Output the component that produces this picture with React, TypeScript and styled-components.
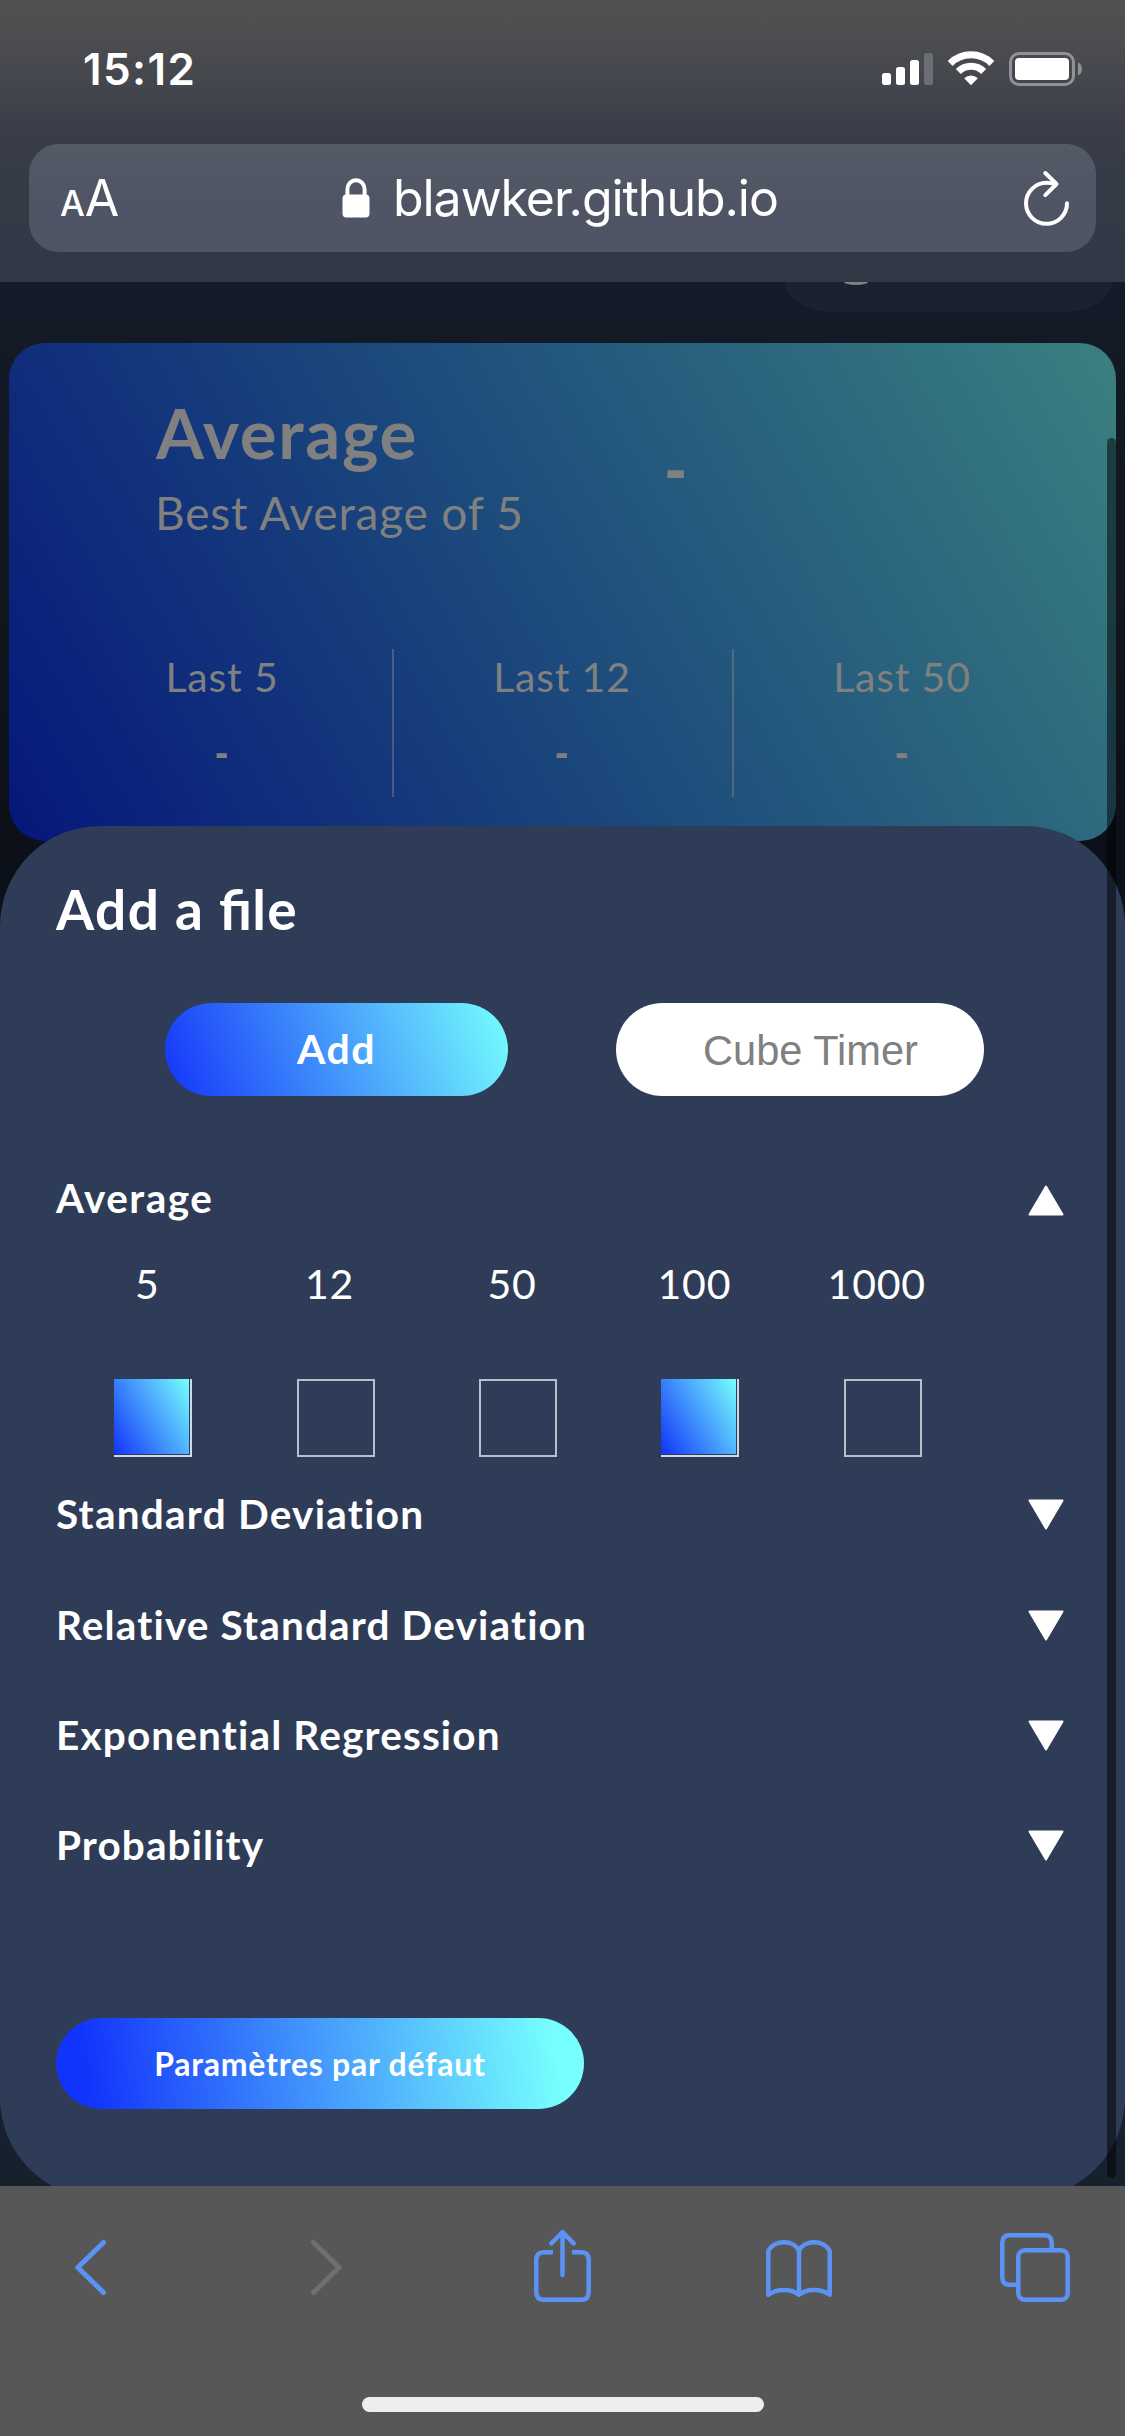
import React, { useState } from "react";
import styled, { createGlobalStyle, css } from "styled-components";

const GlobalStyle = createGlobalStyle`
  *, *::before, *::after { box-sizing: border-box; }
  body { margin: 0; background: #131926; }
  button, input { font: inherit; border: 0; margin: 0; padding: 0; background: none; outline: none; }
`;

const system = `Inter, "Liberation Sans", sans-serif`;
const rounded = `Lato, "Noto Sans", sans-serif`;

const Phone = styled.div`
  width: 1125px;
  height: 2436px;
  display: flex;
  flex-direction: column;
  overflow: hidden;
  font-family: ${rounded};
`;

/* ---------- Browser chrome ---------- */

const Chrome = styled.header`
  height: 282px;
  flex: none;
  padding: 0 29px;
  color: #fff;
  font-family: ${system};
  background: linear-gradient(180deg, #515151 0, #4c4d50 40px, #42454c 90px, #393d49 132px, #353a47 190px, #323745 282px);
`;

const StatusBar = styled.div`
  height: 144px;
  padding: 45px 13px 0 54px;
  display: flex;
  justify-content: space-between;
  align-items: flex-start;
`;

const Clock = styled.time`
  font-size: 44px;
  line-height: 48px;
  font-weight: 600;
  letter-spacing: 1.4px;
`;

const StatusIcons = styled.svg`
  width: 202px;
  height: 36px;
  margin-top: 6px;
  display: block;
`;

const AddressBar = styled.div`
  height: 108px;
  padding: 0 27px 0 31px;
  display: grid;
  grid-template-columns: 60px 1fr 48px;
  align-items: center;
  border-radius: 30px;
  background: linear-gradient(180deg, #555a67, #4f5564 50%, #4e5463);
`;

const ReaderButton = styled.button`
  height: 60px;
  color: #fff;
  display: flex;
  align-items: baseline;
  line-height: 60px;
  white-space: nowrap;
`;

const ReaderLetter = styled.span<{ $size: number; $weight: number }>`
  font-size: ${(p) => p.$size}px;
  font-weight: ${(p) => p.$weight};
`;

const Address = styled.div`
  display: flex;
  align-items: center;
  padding-left: 222px;
  font-size: 50px;
  line-height: 60px;
  white-space: nowrap;
`;

const LockIcon = styled.svg`
  width: 28px;
  height: 40px;
  margin-right: 23px;
`;

const Host = styled.span`
  letter-spacing: -1.05px;
`;

const ReloadIcon = styled.svg`
  width: 48px;
  height: 56px;
  display: block;
`;

/* ---------- Page behind the sheet ---------- */

const Viewport = styled.main`
  position: relative;
  flex: none;
  height: 1904px;
  overflow: hidden;
  background: linear-gradient(180deg, #141a27 0, #11161f 300px, #0c1119 560px, #0c1119 800px, #18202e 1500px, #17202d 100%);
`;

const TopRow = styled.div`
  height: 61px;
  padding-right: 13px;
  display: flex;
  justify-content: flex-end;
`;

const DimmedPill = styled.div`
  width: 327px;
  height: 30px;
  padding-left: 59px;
  border-radius: 0 0 48px 48px / 0 0 30px 30px;
  background: #1b2130;
`;

const PillGlyph = styled.div`
  width: 24px;
  height: 3px;
  border-radius: 0 0 12px 12px / 0 0 3px 3px;
  background: #808080;
`;

const SummaryCard = styled.section`
  width: 1107px;
  height: 498px;
  margin-left: 9px;
  padding: 54px 43px 0;
  border-radius: 36px;
  color: #808080;
  background: linear-gradient(60deg, #05177b 0%, #1e4d7c 50%, #3a8080 100%);
`;

const SummaryHead = styled.div`
  height: 252px;
  padding-left: 104px;
  display: grid;
  grid-template-columns: 509px 1fr;
`;

const SummaryTitle = styled.h1`
  margin: 0;
  font-size: 69px;
  line-height: 72px;
  font-weight: 700;
  letter-spacing: 1.7px;
`;

const SummaryCaption = styled.p`
  margin: 14px 0 0 -1px;
  font-size: 46px;
  line-height: 60px;
  letter-spacing: 0.8px;
`;

const Dash = styled.span<{ $size: number }>`
  font: 700 ${(p) => p.$size}px / 72px "Liberation Sans", sans-serif;
`;

const BestValue = styled.div`
  padding-top: 36px;
`;

const StatGrid = styled.div`
  display: grid;
  grid-template-columns: repeat(3, 340px);
`;

const Stat = styled.div`
  height: 148px;
  display: flex;
  flex-direction: column;
  align-items: center;
  gap: 11px;
  font-size: 41px;
  line-height: 56px;
  letter-spacing: 0.8px;

  & + & {
    box-shadow: inset 2px 0 rgba(128, 128, 128, 0.5);
  }
`;

/* ---------- Sheet ---------- */

const Sheet = styled.section`
  position: absolute;
  left: 0;
  top: 544px;
  width: 1125px;
  height: 1372px;
  padding: 49px 61px 0 56px;
  border-radius: 100px;
  color: #fff;
  background: #2f3c57;
`;

const SheetTitle = styled.h2`
  margin: 0;
  height: 128px;
  font-size: 55px;
  line-height: 68px;
  font-weight: 700;
  letter-spacing: 1.4px;
`;

const Ligature = styled.span`
  letter-spacing: 0;
  font-variant-ligatures: common-ligatures;
`;

const FileRow = styled.div`
  height: 93px;
  padding-left: 109px;
  display: flex;
  gap: 108px;
`;

const pill = css`
  border-radius: 47px;
  color: #fff;
  font-weight: 700;
`;

const AddButton = styled.button`
  ${pill}
  width: 343px;
  height: 93px;
  padding-bottom: 2px;
  font-size: 41px;
  letter-spacing: 1.5px;
  background: linear-gradient(70deg, #1434f9, #76fffe);
`;

const NameInput = styled.input`
  width: 368px;
  height: 93px;
  padding: 2px 0 0 87px;
  border-radius: 47px;
  background: #fff;
  font-family: "Liberation Sans", Arial, sans-serif;
  font-size: 41.6px;

  &::placeholder {
    color: #808080;
    opacity: 1;
  }
`;

const Sections = styled.div`
  padding-top: 75px;
`;

const SectionHeader = styled.button<{ $height: number }>`
  width: 100%;
  height: ${(p) => p.$height}px;
  display: flex;
  align-items: flex-start;
  justify-content: space-between;
  color: #fff;
  font-size: 40.5px;
  line-height: 54px;
  font-weight: 700;
  text-align: left;
`;

const SectionName = styled.span<{ $tracking: number }>`
  letter-spacing: ${(p) => p.$tracking}px;
`;

const Triangle = styled.svg<{ $open: boolean }>`
  width: 36px;
  height: 31px;
  margin-top: ${(p) => (p.$open ? 14 : 12)}px;
  transform: ${(p) => (p.$open ? "none" : "rotate(180deg)")};
`;

const Options = styled.div`
  height: 230px;
  display: grid;
  grid-template-columns: repeat(5, 182.4px);
`;

const Option = styled.label`
  display: flex;
  flex-direction: column;
  align-items: center;
  font-size: 41px;
  line-height: 54px;
  letter-spacing: 0.8px;
`;

const CheckBox = styled.input<{ $on: boolean }>`
  appearance: none;
  width: 78px;
  height: 78px;
  margin: 68px 0 0 12px;
  border: 2px solid #b9bec9;
  ${(p) =>
    p.$on &&
    css`
      border-color: #cfd8e6;
      border-top: 0;
      border-left: 0;
      padding: 0 1px 1px 0;
      background: linear-gradient(60deg, #1233fb, #76fffe) content-box;
    `}
`;

const DefaultsButton = styled.button`
  ${pill}
  display: block;
  width: 528px;
  height: 91px;
  font-size: 32px;
  letter-spacing: 0.75px;
  background: linear-gradient(82deg, #1233fb 6%, #76fffe 94%);
`;

const ScrollThumb = styled.div`
  position: absolute;
  left: 1107px;
  top: 156px;
  width: 9px;
  height: 1740px;
  border-radius: 5px;
  background: rgba(0, 0, 0, 0.5);
`;

/* ---------- Bottom toolbar ---------- */

const Toolbar = styled.footer`
  flex: 1;
  display: flex;
  flex-direction: column;
  align-items: center;
  background: #575757;
`;

const ToolRow = styled.nav`
  width: 100%;
  height: 211px;
  padding: 40px 52px 0 53px;
  display: flex;
  justify-content: space-between;
  align-items: flex-start;
`;

const ToolIcon = styled.svg.attrs({ viewBox: "0 0 76 80" })<{ $muted?: boolean; $weight?: number }>`
  width: 76px;
  height: 80px;
  display: block;
  fill: none;
  stroke: ${(p) => (p.$muted ? "#6f6f6f" : "#5b93f5")};
  stroke-width: ${(p) => p.$weight ?? 4.5};
  stroke-linecap: round;
  stroke-linejoin: round;
`;

const HomeIndicator = styled.div`
  width: 402px;
  height: 15px;
  border-radius: 8px;
  background: #eee;
`;

const stats = ["Last 5", "Last 12", "Last 50"];
const sizes = [5, 12, 50, 100, 1000];
const closedSections = [
  { name: "Standard Deviation", height: 111, tracking: 1.25 },
  { name: "Relative Standard Deviation", height: 110, tracking: 1.15 },
  { name: "Exponential Regression", height: 110, tracking: 1.15 },
  { name: "Probability", height: 200, tracking: 1.1 },
];

function Arrow({ open = false }: { open?: boolean }) {
  return (
    <Triangle $open={open} viewBox="0 0 36 31" fill="#fff" stroke="#fff" strokeWidth="2" strokeLinejoin="round">
      <path d="M18 1.5 L34.5 29.5 H1.5 Z" />
    </Triangle>
  );
}

export default function App() {
  const [selected, setSelected] = useState<number[]>([5, 100]);
  const toggle = (n: number) =>
    setSelected((s) => (s.includes(n) ? s.filter((v) => v !== n) : [...s, n]));

  return (
    <>
      <GlobalStyle />
      <Phone>
        <Chrome>
          <StatusBar>
            <Clock>15:12</Clock>
            <StatusIcons viewBox="0 0 202 36" fill="#fff">
              <rect x="1" y="22" width="9" height="12" rx="2.5" />
              <rect x="15" y="16" width="9" height="18" rx="2.5" />
              <rect x="29" y="9" width="9" height="25" rx="2.5" />
              <rect x="43" y="2" width="9" height="32" rx="2.5" fill="#6b6e76" />
              <g fill="none" stroke="#fff">
                <path d="M69.2 12.4 a29.5 29.5 0 0 1 41.6 0" strokeWidth="7" />
                <path d="M77.3 20.6 a18 18 0 0 1 25.4 0" strokeWidth="7" />
              </g>
              <path d="M90 34.2 L83.2 27.2 a9.8 9.8 0 0 1 13.6 0 Z" />
              <rect x="129.5" y="2.5" width="63" height="31" rx="8.5" fill="none" stroke="#919297" strokeWidth="3" />
              <rect x="134" y="7" width="54" height="22" rx="4" />
              <path d="M197 11.5 c5.2 2 5.2 11 0 13 Z" fill="#919297" />
            </StatusIcons>
          </StatusBar>
          <AddressBar>
            <ReaderButton aria-label="Reader options">
              <ReaderLetter $size={35} $weight={500}>A</ReaderLetter>
              <ReaderLetter $size={50} $weight={400}>A</ReaderLetter>
            </ReaderButton>
            <Address>
              <LockIcon viewBox="0 0 28 40">
                <path d="M5.4 18 V11.5 a8.6 9.3 0 0 1 17.2 0 V18" fill="none" stroke="#fff" strokeWidth="4" />
                <rect x="0.5" y="16.5" width="27" height="23" rx="4" fill="#fff" />
              </LockIcon>
              <Host>blawker.github.io</Host>
            </Address>
            <ReloadIcon viewBox="0 0 48 56" fill="none" stroke="#fff" strokeWidth="4" strokeLinecap="round" strokeLinejoin="round">
              <path d="M33.8 14.2 C31 13.2 28 12.8 25.5 12.8 A20.5 20.5 0 1 0 46 33.3" />
              <path d="M24.3 3 L35.5 14 L24.3 25.2" />
            </ReloadIcon>
          </AddressBar>
        </Chrome>

        <Viewport>
          <TopRow>
            <DimmedPill>
              <PillGlyph />
            </DimmedPill>
          </TopRow>
          <SummaryCard>
            <SummaryHead>
              <div>
                <SummaryTitle>Average</SummaryTitle>
                <SummaryCaption>Best Average of 5</SummaryCaption>
              </div>
              <BestValue>
                <Dash $size={64}>-</Dash>
              </BestValue>
            </SummaryHead>
            <StatGrid>
              {stats.map((label) => (
                <Stat key={label}>
                  <span>{label}</span>
                  <Dash $size={40}>-</Dash>
                </Stat>
              ))}
            </StatGrid>
          </SummaryCard>

          <Sheet>
            <SheetTitle>
              Add a <Ligature>fi</Ligature>le
            </SheetTitle>
            <FileRow>
              <AddButton>Add</AddButton>
              <NameInput placeholder="Cube Timer" />
            </FileRow>
            <Sections>
              <SectionHeader $height={86}>
                <SectionName $tracking={1.5}>Average</SectionName>
                <Arrow open />
              </SectionHeader>
              <Options>
                {sizes.map((n) => (
                  <Option key={n}>
                    {n}
                    <CheckBox type="checkbox" $on={selected.includes(n)} checked={selected.includes(n)} onChange={() => toggle(n)} />
                  </Option>
                ))}
              </Options>
              {closedSections.map((s) => (
                <SectionHeader key={s.name} $height={s.height}>
                  <SectionName $tracking={s.tracking}>{s.name}</SectionName>
                  <Arrow />
                </SectionHeader>
              ))}
            </Sections>
            <DefaultsButton>Paramètres par défaut</DefaultsButton>
          </Sheet>
          <ScrollThumb />
        </Viewport>

        <Toolbar>
          <ToolRow>
            <ToolIcon $weight={5}>
              <path d="M50.5 16.5 L24.8 41.5 L50.5 66.5" />
            </ToolIcon>
            <ToolIcon $weight={5} $muted>
              <path d="M24.5 16.5 L50.2 41.5 L24.5 66.5" />
            </ToolIcon>
            <ToolIcon>
              <path d="M37.5 49 V7 M26.3 17.5 L37.5 6.2 L48.7 17.5" />
              <path
                strokeLinecap="butt"
                d="M28 26.2 H18.8 Q11.3 26.2 11.3 34 V66 Q11.3 73.8 18.8 73.8 H56.2 Q63.7 73.8 63.7 66 V34 Q63.7 26.2 56.2 26.2 H47"
              />
            </ToolIcon>
            <ToolIcon>
              <path d="M7.3 68.8 V25 C13 13.3 33 13.3 38 25 C43 13.3 63 13.3 68.7 25 V68.8 C60 62.3 46 62.3 38 68.8 C30 62.3 16 62.3 7.3 68.8 Z M38 25 V68.8" />
            </ToolIcon>
            <ToolIcon>
              <path d="M21.3 58.7 H12.8 Q5.3 58.7 5.3 51.2 V16.8 Q5.3 9.3 12.8 9.3 H47.2 Q54.7 9.3 54.7 16.8 V24.3" strokeLinecap="butt" />
              <rect x="21.3" y="24.3" width="49.4" height="49.4" rx="6.5" />
            </ToolIcon>
          </ToolRow>
          <HomeIndicator />
        </Toolbar>
      </Phone>
    </>
  );
}
